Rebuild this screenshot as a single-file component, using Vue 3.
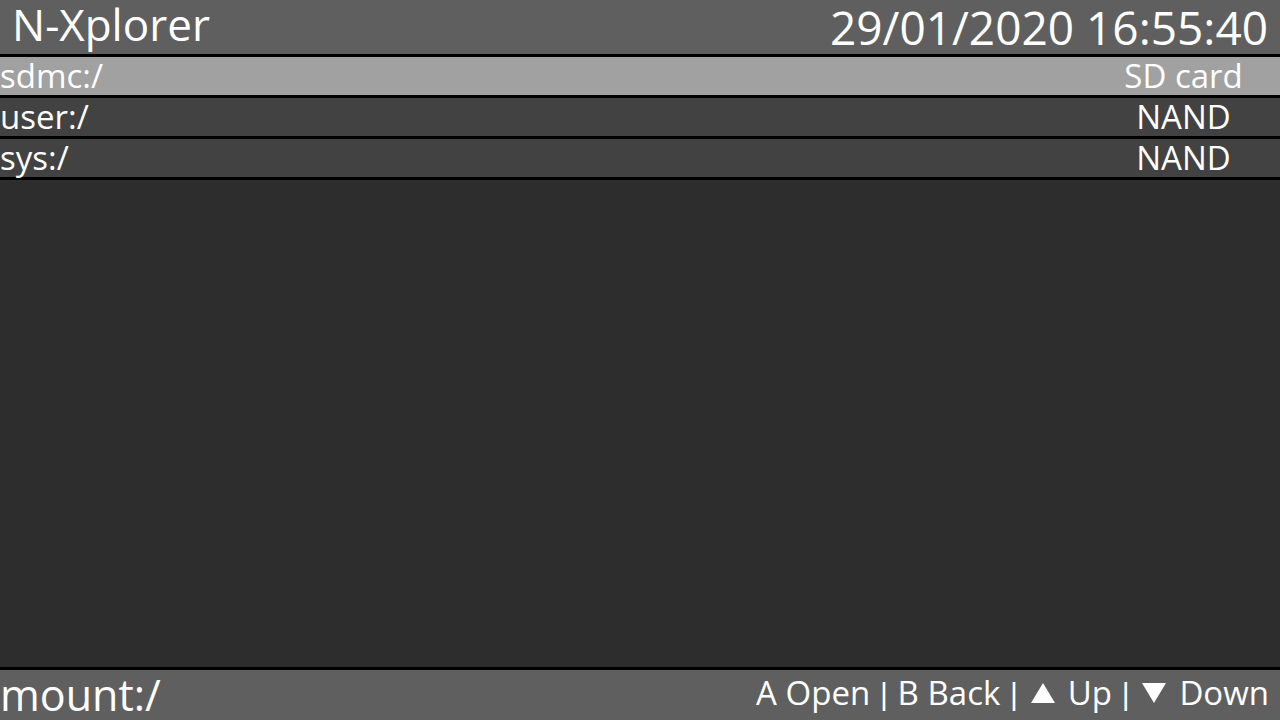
<script setup>
import { ref } from 'vue'

const mounts = [
  { path: 'sdmc:/', device: 'SD card' },
  { path: 'user:/', device: 'NAND' },
  { path: 'sys:/', device: 'NAND' },
]
const selected = ref(0)
</script>

<template>
  <div class="explorer">
    <header class="bar top">
      <h1 class="title">N-Xplorer</h1>
      <time class="clock" datetime="2020-01-29T16:55:40">29/01/2020 16:55:40</time>
    </header>

    <main class="list">
      <button
        v-for="(mount, i) in mounts"
        :key="mount.path"
        type="button"
        class="row"
        :class="{ selected: i === selected }"
        @click="selected = i"
      >
        <span class="path">{{ mount.path }}</span>
        <span class="device">{{ mount.device }}</span>
      </button>
    </main>

    <footer class="bar bottom">
      <span class="location">mount:/</span>
      <div class="hints">
        <span>A Open</span>
        <span class="divider">|</span>
        <span>B Back</span>
        <span class="divider">|</span>
        <svg class="arrow" viewBox="0 0 24 20" aria-hidden="true"><path d="M12 0 24 20H0Z" /></svg>
        <span>Up</span>
        <span class="divider">|</span>
        <svg class="arrow" viewBox="0 0 24 20" aria-hidden="true"><path d="M0 0H24L12 20Z" /></svg>
        <span>Down</span>
      </div>
    </footer>
  </div>
</template>

<style>
body {
  background: #2d2d2d;
}
</style>

<style scoped>
.explorer {
  display: flex;
  flex-direction: column;
  min-height: 100vh;
  background: #2d2d2d;
  color: #fff;
  font-family: "Open Sans", "Noto Sans", sans-serif;
  font-weight: 400;
}
.bar {
  display: flex;
  justify-content: space-between;
  background: #5f5f5f;
  white-space: nowrap;
}
.top {
  padding: 0 12px;
  border-bottom: 3px solid #000;
}
.title {
  margin: 0;
  font-size: 44px;
  font-weight: 400;
  line-height: 48px;
}
.clock {
  font-size: 46px;
  line-height: 54px;
}
.list {
  flex: 1;
}
.row {
  display: flex;
  width: 100%;
  padding: 0;
  border: 0;
  border-bottom: 3px solid #000;
  border-radius: 0;
  background: #424242;
  color: inherit;
  font: inherit;
  font-size: 33px;
  line-height: 38px;
  text-align: left;
}
.row.selected {
  background: #a1a1a1;
}
.path {
  flex: 1;
}
.device {
  width: 193px;
  text-align: center;
}
.bottom {
  padding-right: 11px;
  border-top: 3px solid #000;
}
.location {
  font-size: 43px;
  line-height: 50px;
}
.hints {
  display: flex;
  align-items: center;
  gap: 10px;
  padding-bottom: 4px;
  font-size: 33px;
  line-height: 46px;
}
.divider {
  margin: 0 -4px;
  font-size: 28px;
  font-weight: 600;
  line-height: 42px;
}
.arrow {
  width: 24px;
  height: 20px;
  margin: 0 3px;
  fill: #fff;
}
</style>
